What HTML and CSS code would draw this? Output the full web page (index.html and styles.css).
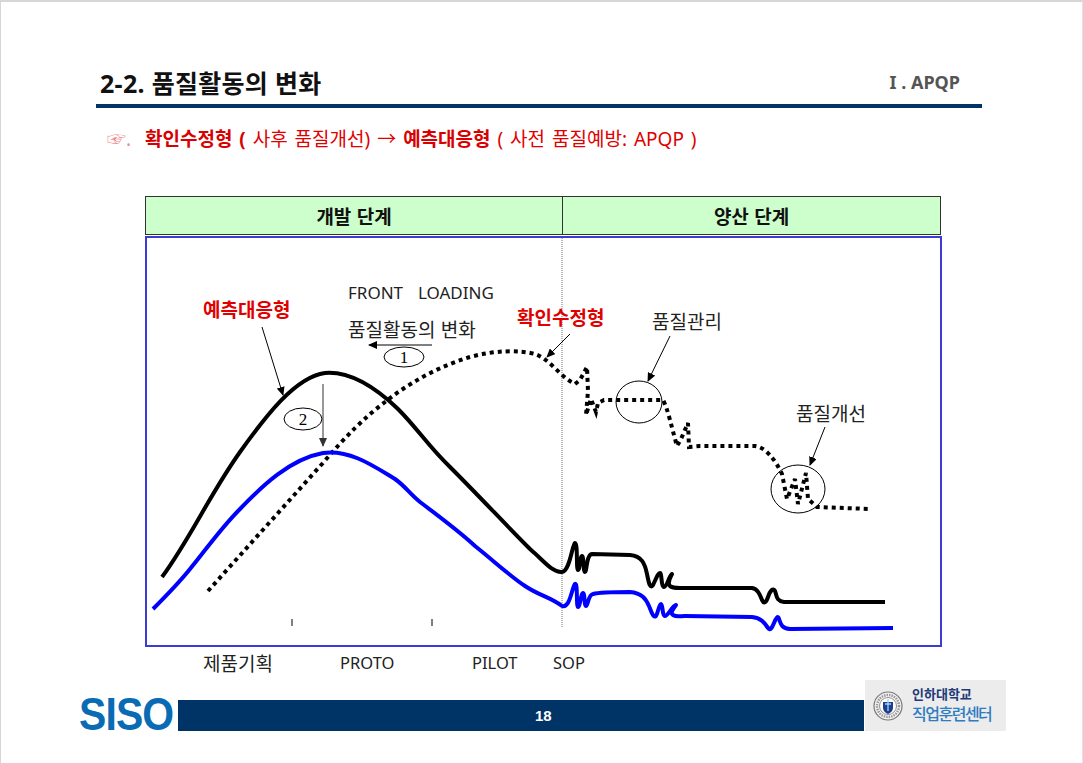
FILE: index.html
```html
<!DOCTYPE html>
<html lang="ko">
<head>
<meta charset="utf-8">
<title>2-2. 품질활동의 변화</title>
<link rel="stylesheet" href="styles.css">
</head>
<body>
<div class="page">
  <header class="top">
    <h1 class="title">2-2. 품질활동의 변화</h1>
    <div class="chapter">I . APQP</div>
  </header>

  <p class="lead"><span class="hand">☞.</span>&nbsp; <b>확인수정형 (</b> 사후 품질개선) → <b>예측대응형</b> ( 사전 품질예방: APQP )</p>

  <section class="chart">
    <div class="phases">
      <div class="phase phase-dev">개발 단계</div>
      <div class="phase">양산 단계</div>
    </div>
    <div class="plot">
      <svg class="plot-svg" width="793" height="407" viewBox="147 239 793 407">
        <defs>
          <marker id="ah" markerUnits="userSpaceOnUse" markerWidth="9" markerHeight="8" refX="8" refY="4" orient="auto">
            <path d="M0,0 L9,4 L0,8 z" fill="#000"/>
          </marker>
          <marker id="ahg" markerUnits="userSpaceOnUse" markerWidth="9" markerHeight="8" refX="8" refY="4" orient="auto">
            <path d="M0,0 L9,4 L0,8 z" fill="#333"/>
          </marker>
        </defs>

        <line x1="562" y1="239" x2="562" y2="628" class="divider"/>
        <line x1="292" y1="620" x2="292" y2="627" class="tick"/>
        <line x1="432" y1="620" x2="432" y2="627" class="tick"/>

        <path class="dots" d="M208,592 L322,465 C345,438 365,418 385,403 C410,383 440,367 470,358 C495,351 520,351 535,355 C550,360 560,378 575,385 L580,381 L587,368 L588,392 L586,416 L591,400 L596,413 L598,404 L604,401 L663,401 C668,410 672,430 677,447 L681,440 L688,424 L689,448 L700,447 L755,447 C765,448 775,460 782,475 L787,500 L795,480 L798,505 L806,474 L808,500 L817,508 L870,510"/>

        <path class="curve-black" d="M162,578 C190,540 210,495 240,453 C265,418 295,378 325,374 C350,372 375,388 398,410 C418,430 428,447 450,468 C480,498 505,525 530,550 C545,563 553,574 562,573 C570,572 572,546 575,544 C578,544 576,571 578,571 C580,571 580,557 582,557 C584,557 583,573 585,573 C587,573 586,556 592,555 L630,556 C642,557 645,565 647,575 C649,585 650,590 653,586 C656,580 658,574 660,574 C662,574 661,588 664,588 C667,588 669,577 672,575 C670,579 667,584 670,587 C672,589 676,589 680,589 L752,589 C758,590 760,596 762,601 C764,605 766,604 768,598 C770,592 773,588 775,592 C777,597 776,602 784,603 L885,603"/>

        <path class="curve-blue" d="M153,610 C165,598 178,585 190,570 C205,552 220,530 240,510 C262,487 290,460 323,454 C350,450 375,468 395,480 C405,487 410,495 420,503 C440,518 460,533 475,547 C495,563 510,577 525,587 C540,597 550,598 562,607 C570,610 572,588 575,585 C578,583 576,608 578,608 C580,608 581,594 583,594 C585,594 584,607 586,607 C588,607 588,596 593,595 C600,593 610,593 630,593 C642,594 646,600 649,607 C652,614 653,619 656,617 C658,614 659,605 661,605 C663,605 662,617 665,617 C668,617 672,607 676,606 C673,610 670,614 673,616 C676,618 680,617 685,617 L752,618 C762,619 765,625 768,629 C770,632 772,629 774,624 C776,619 778,616 779,620 C781,625 781,629 790,630 L893,629"/>

        <ellipse cx="639" cy="403" rx="23" ry="21" class="ring"/>
        <ellipse cx="798" cy="490" rx="27" ry="24" class="ring"/>
        <ellipse cx="404" cy="358" rx="20" ry="10" class="ring"/>
        <ellipse cx="303" cy="420" rx="19" ry="11" class="ring"/>

        <line x1="262" y1="328" x2="283" y2="396" class="arrow" marker-end="url(#ah)"/>
        <line x1="570" y1="335" x2="547" y2="358" class="arrow" marker-end="url(#ah)"/>
        <line x1="670" y1="337" x2="648" y2="382" class="arrow" marker-end="url(#ah)"/>
        <line x1="825" y1="428" x2="810" y2="466" class="arrow" marker-end="url(#ah)"/>
        <line x1="432" y1="346" x2="369" y2="346" class="arrow" marker-end="url(#ah)"/>
        <line x1="323" y1="385" x2="323" y2="447" class="arrow grey" marker-end="url(#ahg)"/>

        <text x="203" y="309" class="lbl ko red">예측대응형</text>
        <text x="348" y="293" class="lbl">FRONT</text>
        <text x="418" y="293" class="lbl">LOADING</text>
        <text x="348" y="329" class="lbl ko">품질활동의 변화</text>
        <text x="517" y="317" class="lbl ko red">확인수정형</text>
        <text x="652" y="321" class="lbl ko">품질관리</text>
        <text x="796" y="413" class="lbl ko">품질개선</text>
        <text x="404" y="358" class="num">1</text>
        <text x="303" y="420" class="num">2</text>
      </svg>
    </div>
    <div class="axis">
      <span class="ko">제품기획</span><span>PROTO</span><span>PILOT</span><span>SOP</span>
    </div>
  </section>

  <footer class="foot">
    <div class="siso">SISO</div>
    <div class="bar"><span class="pageno">18</span></div>
    <div class="inha">
      <svg class="emblem" width="30" height="30" viewBox="0 0 30 30">
        <circle cx="15" cy="15" r="14" fill="#f4f4f4" stroke="#777" stroke-width="1.2"/>
        <circle cx="15" cy="15" r="11" fill="none" stroke="#999" stroke-width="2.5" stroke-dasharray="1.5 1"/>
        <circle cx="15" cy="15" r="8.5" fill="#fff" stroke="#777" stroke-width="0.8"/>
        <path d="M10,11 L20,11 L20,17 C20,20 17.5,22 15,23 C12.5,22 10,20 10,17 Z" fill="#1e3f8a"/>
        <path d="M15,8 L15,20 M12,13 L18,13" stroke="#9fd0ff" stroke-width="1.3"/>
      </svg>
      <div class="inha-text">
        <div class="inha-uni">인하대학교</div>
        <div class="inha-center">직업훈련센터</div>
      </div>
    </div>
  </footer>
</div>
</body>
</html>
```

FILE: styles.css
```css
html, body {
  margin: 0;
  padding: 0;
  background: #fff;
}

body {
  font-family: "Noto Sans", "Noto Sans CJK KR", sans-serif;
  color: #111;
}

.page {
  width: 1083px;
  height: 763px;
  box-sizing: border-box;
  border-top: 2px solid #d6d6d6;
  border-left: 1px solid #d6d6d6;
  border-right: 1px solid #e2e2e2;
  overflow: hidden;
}

.top {
  margin-left: 95px;
  width: 886px;
  height: 106px;
  box-sizing: border-box;
  display: flex;
  justify-content: space-between;
  align-items: flex-end;
  padding-bottom: 7px;
  border-bottom: 4px solid #003366;
}

.title {
  margin: 0 0 0 4px;
  font-family: "Noto Sans", "Noto Sans CJK KR", sans-serif;
  font-size: 25px;
  line-height: 28px;
  font-weight: bold;
  letter-spacing: 0.3px;
  color: #111;
}

.chapter {
  margin: 0 22px 5px 0;
  font-size: 18px;
  line-height: 20px;
  font-weight: bold;
  color: #555;
}

.lead {
  margin: 20px 0 0 106px;
  font-size: 19px;
  line-height: 22px;
  word-spacing: 2px;
  color: #e00000;
}

.lead b {
  font-weight: bold;
  color: #d80000;
}

.hand {
  color: #f08a8a;
}

.chart {
  margin: 46px 0 0 144px;
  width: 797px;
}

.phases {
  display: grid;
  grid-template-columns: 417px 1fr;
  width: 796px;
  height: 39px;
  box-sizing: border-box;
  border: 1px solid #333;
  background: #ccffcc;
}

.phase {
  display: flex;
  align-items: center;
  justify-content: center;
  font-family: "Noto Sans CJK KR", sans-serif;
  font-size: 19px;
  font-weight: bold;
  color: #111;
}

.phase-dev {
  border-right: 1px solid #333;
}

.plot {
  margin-top: 1px;
  width: 797px;
  height: 411px;
  box-sizing: border-box;
  border: 2px solid #3c3cd2;
}

.plot-svg {
  display: block;
}

.divider {
  stroke: #777;
  stroke-width: 1;
  stroke-dasharray: 1 1;
}

.tick {
  stroke: #000;
  stroke-width: 1;
}

.dots {
  fill: none;
  stroke: #000;
  stroke-width: 4;
  stroke-dasharray: 4 4;
}

.curve-black {
  fill: none;
  stroke: #000;
  stroke-width: 4;
  stroke-linejoin: round;
}

.curve-blue {
  fill: none;
  stroke: #0000ff;
  stroke-width: 4;
  stroke-linejoin: round;
}

.ring {
  fill: none;
  stroke: #000;
  stroke-width: 1;
}

.arrow {
  stroke: #000;
  stroke-width: 1;
}

.arrow.grey {
  stroke: #333;
}

.lbl {
  font-family: "Noto Sans", "Noto Sans CJK KR", sans-serif;
  font-size: 17px;
  fill: #222;
  dominant-baseline: central;
}

.lbl.ko {
  font-family: "Noto Sans CJK KR", sans-serif;
  font-size: 19px;
}

.lbl.red {
  fill: #e00000;
  font-weight: bold;
}

.num {
  font-family: "Liberation Serif", serif;
  font-size: 17px;
  fill: #000;
  text-anchor: middle;
  dominant-baseline: central;
}

.axis {
  margin: 6px 0 0 58px;
  display: grid;
  grid-template-columns: 137px 132px 81px auto;
  font-size: 16.5px;
  line-height: 20px;
  color: #222;
}

.axis .ko {
  font-family: "Noto Sans CJK KR", sans-serif;
  font-size: 19px;
}

.foot {
  margin: 7px 0 0 78px;
  height: 51px;
  display: flex;
  align-items: flex-end;
}

.siso {
  width: 99px;
  height: 34px;
  font-family: "Liberation Sans", sans-serif;
  font-weight: bold;
  font-size: 47px;
  line-height: 34px;
  letter-spacing: -1px;
  color: #0a6bb5;
  white-space: nowrap;
  transform: scaleX(0.87);
  transform-origin: left bottom;
}

.bar {
  width: 686px;
  height: 31px;
  box-sizing: border-box;
  padding-left: 357px;
  display: flex;
  align-items: center;
  background: #003366;
}

.pageno {
  font-family: "Liberation Sans", sans-serif;
  font-weight: bold;
  font-size: 15px;
  color: #fff;
}

.inha {
  width: 141px;
  height: 51px;
  margin-left: 1px;
  box-sizing: border-box;
  padding-left: 8px;
  display: flex;
  align-items: center;
  gap: 9px;
  background: #ececec;
}

.emblem {
  display: block;
  flex: none;
}

.inha-text {
  display: flex;
  flex-direction: column;
}

.inha-uni {
  font-family: "Noto Sans CJK KR", sans-serif;
  font-weight: bold;
  font-size: 13px;
  line-height: 16px;
  color: #1e3a78;
}

.inha-center {
  font-family: "Noto Sans CJK KR", sans-serif;
  font-weight: 500;
  font-size: 16px;
  line-height: 23px;
  letter-spacing: -1.5px;
  color: #2f7cc0;
}
```
